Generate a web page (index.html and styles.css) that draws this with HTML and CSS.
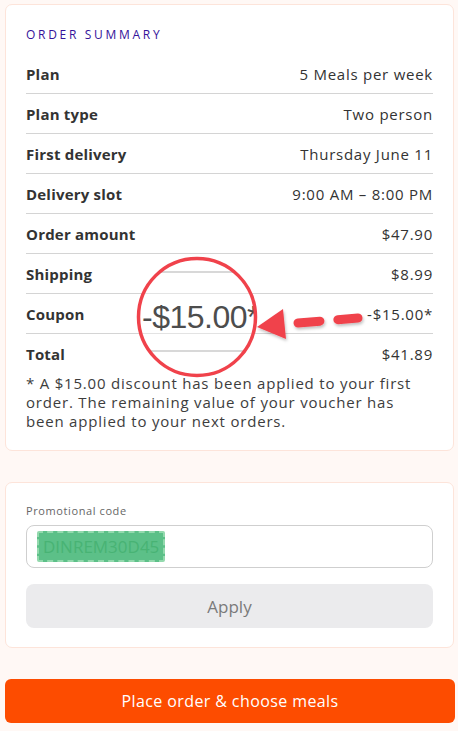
FILE: index.html
```html
<!DOCTYPE html>
<html lang="en">
<head>
<meta charset="utf-8">
<title>Order summary</title>
<link rel="stylesheet" href="styles.css">
</head>
<body>
<main class="page">
  <section class="card summary">
    <h2 class="title">ORDER SUMMARY</h2>
    <div class="row"><span class="label">Plan</span><span class="value">5 Meals per week</span></div>
    <div class="row"><span class="label">Plan type</span><span class="value">Two person</span></div>
    <div class="row"><span class="label">First delivery</span><span class="value">Thursday June 11</span></div>
    <div class="row"><span class="label">Delivery slot</span><span class="value">9:00 AM – 8:00 PM</span></div>
    <div class="row"><span class="label">Order amount</span><span class="value">$47.90</span></div>
    <div class="row"><span class="label">Shipping</span><span class="value">$8.99</span></div>
    <div class="row"><span class="label">Coupon</span><span class="value">-$15.00*</span></div>
    <div class="row last"><span class="label">Total</span><span class="value">$41.89</span></div>
    <p class="note">* A $15.00 discount has been applied to your first order. The remaining value of your voucher has been applied to your next orders.</p>
  </section>

  <section class="card promo">
    <label class="promo-label">Promotional code</label>
    <div class="input"><span class="redact">DINREM30D45</span></div>
    <button class="apply" type="button">Apply</button>
  </section>

  <button class="cta" type="button">Place order &amp; choose meals</button>

  <svg class="annotation" width="458" height="460" viewBox="0 0 458 460">
    <defs>
      <clipPath id="lens"><circle cx="197" cy="317" r="58"/></clipPath>
      <filter id="shadow" x="-20%" y="-50%" width="140%" height="200%">
        <feDropShadow dx="1" dy="2" stdDeviation="1.5" flood-color="#000" flood-opacity="0.25"/>
      </filter>
    </defs>
    <g clip-path="url(#lens)">
      <rect x="130" y="255" width="140" height="125" fill="#ffffff" fill-opacity="0.35"/>
      <rect x="130" y="271" width="140" height="2" fill="#d8d8d8"/>
      <rect x="130" y="350" width="140" height="2" fill="#d8d8d8"/>
      <text x="142" y="328" class="lens-text">-$15.00*</text>
    </g>
    <circle cx="197" cy="317" r="58.5" fill="none" stroke="#f0424b" stroke-width="3.5"/>
    <g filter="url(#shadow)">
      <line x1="298" y1="323" x2="358" y2="318" stroke="#f0424b" stroke-width="9" stroke-linecap="round" stroke-dasharray="22 18"/>
      <polygon points="257,327 283,309 286,339" fill="#f0424b"/>
    </g>
  </svg>
</main>
</body>
</html>
```

FILE: styles.css
```css
* { box-sizing: border-box; }

html, body {
  margin: 0;
  padding: 0;
  background: #fff8f5;
}

body {
  font-family: "Open Sans", "Liberation Sans", sans-serif;
  color: #333333;
}

.page {
  position: relative;
  width: 458px;
  height: 731px;
  padding: 4px 4px 0 5px;
  display: flex;
  flex-direction: column;
}

.card {
  background: #ffffff;
  border: 1px solid #fde4da;
  border-radius: 7px;
  padding: 19px 20px 19px 20px;
}

.title {
  margin: 1px 0 9px;
  height: 20px;
  line-height: 20px;
  font-size: 12px;
  font-weight: 400;
  letter-spacing: 2.7px;
  color: #34129a;
}

.row {
  display: flex;
  justify-content: space-between;
  align-items: center;
  height: 40px;
  border-bottom: 1px solid #d4d4d4;
  font-size: 15px;
}

.row.last {
  border-bottom: none;
}

.label {
  font-weight: 700;
  letter-spacing: 0.2px;
  color: #333333;
}

.value {
  font-weight: 400;
  letter-spacing: 0.75px;
  color: #333333;
}

.note {
  margin: 0;
  font-size: 15px;
  line-height: 19px;
  letter-spacing: 0.8px;
  color: #3d3d3d;
}

.promo {
  margin-top: 31px;
  display: flex;
  flex-direction: column;
}

.promo-label {
  font-size: 11px;
  line-height: 17px;
  letter-spacing: 0.6px;
  color: #666666;
  margin-bottom: 6px;
}

.input {
  height: 43px;
  border: 1px solid #cfcfcf;
  border-radius: 8px;
  display: flex;
  align-items: center;
  padding-left: 10px;
}

.redact {
  display: inline-block;
  height: 31px;
  line-height: 27px;
  padding: 0 4px;
  background: #5cc088;
  border: 2px dashed #93d9ad;
  border-radius: 2px;
  color: #48b374;
  font-size: 17px;
}

.apply {
  margin-top: 16px;
  height: 44px;
  border: none;
  border-radius: 8px;
  background: #ebebed;
  color: #7a7a7a;
  font-family: inherit;
  font-size: 17px;
}

.cta {
  margin-top: 31px;
  margin-right: -1px;
  height: 44px;
  border: none;
  border-radius: 6px;
  background: #fd4c00;
  color: #ffffff;
  font-family: inherit;
  font-size: 16px;
  letter-spacing: 0.4px;
}

.annotation {
  position: absolute;
  left: 0;
  top: 0;
  pointer-events: none;
}

.lens-text {
  font-family: "Liberation Sans", "Open Sans", sans-serif;
  font-size: 32px;
  letter-spacing: -0.5px;
  fill: #4d4d4d;
}
```
